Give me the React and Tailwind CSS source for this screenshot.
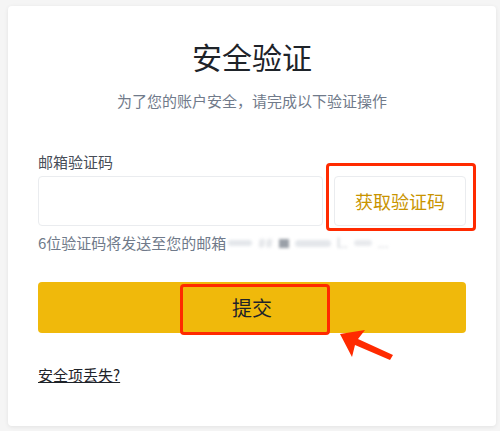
import React from 'react';

const FONT = { fontFamily: '"Noto Sans CJK SC", "Noto Sans", sans-serif' };

export default function App() {
    return (
        <div className="relative w-[500px] h-[431px] bg-[#f5f5f5] pt-[6px] px-[8px]" style={FONT}>
            <div className="relative w-[488px] h-[420px] bg-white rounded-[4px] shadow-[0_1px_4px_rgba(0,0,0,0.08)] px-[30px] pt-[30px]">
                {/* Header */}
                <h1 className="text-center text-[30px] leading-[40px] text-[#1e2329] font-normal">安全验证</h1>
                <p className="mt-[14px] text-center text-[15px] leading-[22px] text-[#707a8a]">
                    为了您的账户安全，请完成以下验证操作
                </p>

                {/* Email code */}
                <label className="block mt-[39px] text-[15px] leading-[22px] text-[#474d57]">邮箱验证码</label>
                <div className="mt-[3px] flex gap-[11px] h-[50px]">
                    <input
                        type="text"
                        className="flex-1 min-w-0 rounded-[4px] border border-[#eaecef] px-3 outline-none"
                    />
                    <div className="relative w-[132px]">
                        <button className="w-full h-full rounded-[4px] border border-[#eaecef] bg-white text-[18px] text-[#c99400]">
                            获取验证码
                        </button>
                        <div className="absolute left-[-8px] right-[-10px] top-[-13px] bottom-[-5px] border-[3px] border-[#ff2a00] rounded-[4px] pointer-events-none" />
                    </div>
                </div>
                <p className="mt-[6px] flex items-center text-[15px] leading-[22px] text-[#707a8a] whitespace-nowrap">
                    6位验证码将发送至您的邮箱
                    {/* masked address */}
                    <span className="ml-[2px] flex items-center gap-[6px] blur-[1.5px]">
                        <span className="w-[24px] h-[6px] bg-[#e4e7eb] rounded-sm" />
                        <span className="text-[13px] text-[#cdd1d7]">##</span>
                        <span className="w-[10px] h-[9px] bg-[#9aa0a8]" />
                        <span className="w-[36px] h-[7px] bg-[#e4e7eb] rounded-sm" />
                        <span className="text-[13px] text-[#c5cad1]">l..</span>
                        <span className="w-[18px] h-[6px] bg-[#e8eaed] rounded-sm" />
                        <span className="text-[13px] text-[#cdd1d7]">...</span>
                    </span>
                </p>

                {/* Submit */}
                <div className="relative mt-[28px]">
                    <button className="w-full h-[51px] rounded-[4px] bg-[#f0b90b] text-[20px] text-[#1e2329]">提交</button>
                    <div className="absolute left-[142px] top-[2px] w-[150px] h-[51px] border-[3px] border-[#ff2a00] rounded-[4px] pointer-events-none" />
                </div>

                <a href="#" className="inline-block mt-[31px] text-[15px] leading-[22px] text-[#1e2329] underline">
                    安全项丢失?
                </a>
            </div>

            {/* annotation arrow */}
            <svg className="absolute left-0 top-0 pointer-events-none" width="500" height="431" viewBox="0 0 500 431">
                <polygon
                    points="340,334 365,330 358,339 393,355 390,360 355,345 352,357"
                    fill="#ff2a00"
                />
            </svg>
        </div>
    );
}
